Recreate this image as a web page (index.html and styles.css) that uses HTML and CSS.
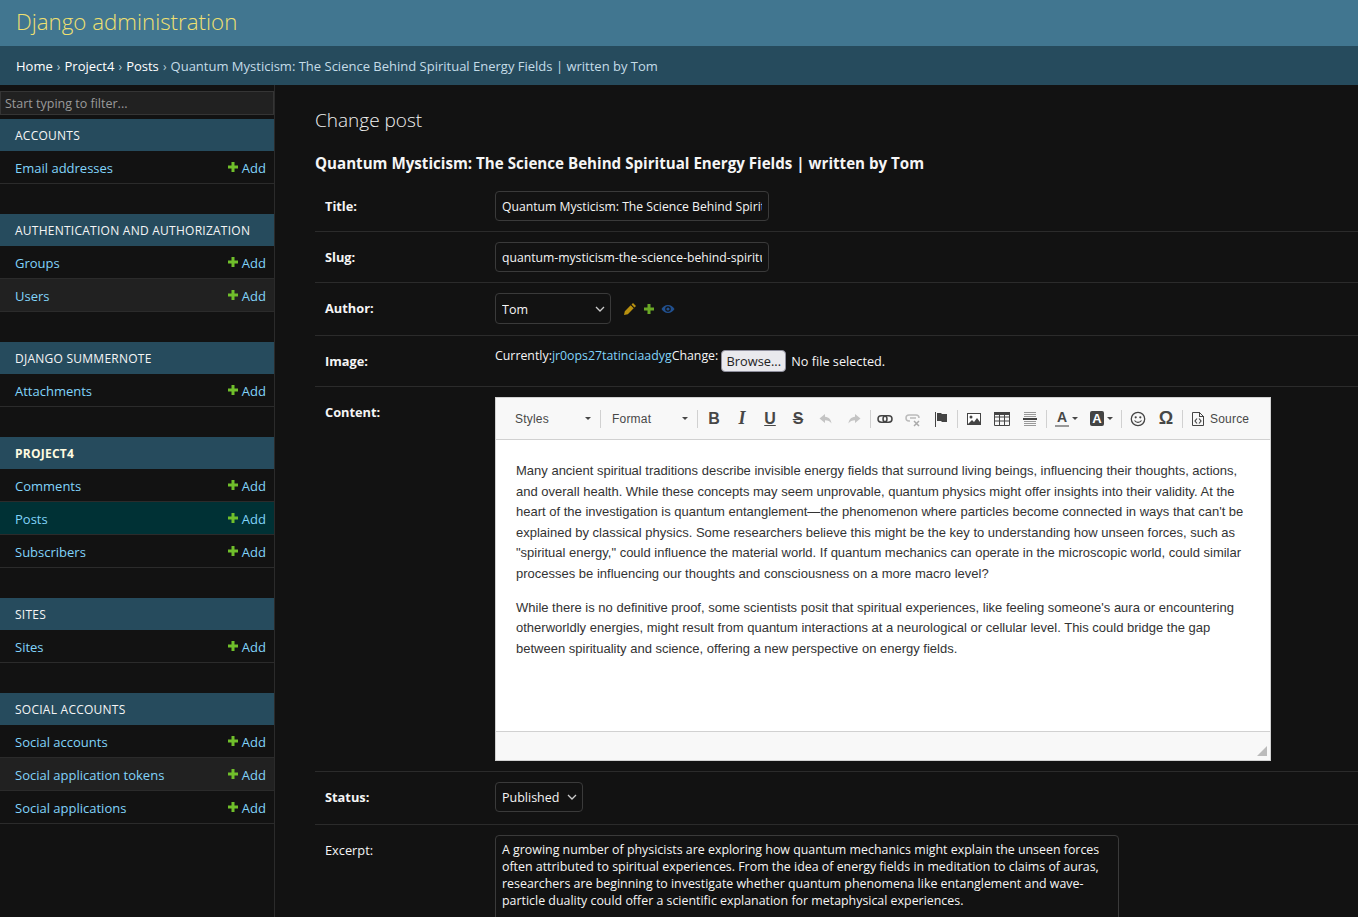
FILE: index.html
```html
<!DOCTYPE html>
<html lang="en">
<head>
  <meta charset="UTF-8">
  <title>Change post | Django site admin</title>
  <link rel="stylesheet" href="styles.css">
</head>
<body>
  <svg class="defs" width="0" height="0">
    <symbol id="plus" viewBox="0 0 12 12"><path d="M4.500 1h3v3.500H11v3H7.500V11h-3V7.500H1v-3h3.500z"/></symbol>
  </svg>

  <header class="branding"><a class="brand" href="#">Django administration</a></header>
  <nav class="crumbs">
    <a href="#">Home</a> <span class="sep">›</span> <a href="#">Project4</a> <span class="sep">›</span> <a href="#">Posts</a> <span class="sep">›</span> Quantum Mysticism: The Science Behind Spiritual Energy Fields | written by Tom
  </nav>

  <div class="layout">
    <aside class="sidebar">
      <input class="filter" type="text" placeholder="Start typing to filter...">

      <section class="app">
        <h3 class="app-name">Accounts</h3>
        <div class="model"><a href="#">Email addresses</a><a class="add" href="#"><svg><use href="#plus"/></svg>Add</a></div>
      </section>

      <section class="app">
        <h3 class="app-name">Authentication and Authorization</h3>
        <div class="model"><a href="#">Groups</a><a class="add" href="#"><svg><use href="#plus"/></svg>Add</a></div>
        <div class="model alt"><a href="#">Users</a><a class="add" href="#"><svg><use href="#plus"/></svg>Add</a></div>
      </section>

      <section class="app">
        <h3 class="app-name">Django Summernote</h3>
        <div class="model"><a href="#">Attachments</a><a class="add" href="#"><svg><use href="#plus"/></svg>Add</a></div>
      </section>

      <section class="app">
        <h3 class="app-name current-app">Project4</h3>
        <div class="model"><a href="#">Comments</a><a class="add" href="#"><svg><use href="#plus"/></svg>Add</a></div>
        <div class="model current"><a href="#">Posts</a><a class="add" href="#"><svg><use href="#plus"/></svg>Add</a></div>
        <div class="model"><a href="#">Subscribers</a><a class="add" href="#"><svg><use href="#plus"/></svg>Add</a></div>
      </section>

      <section class="app">
        <h3 class="app-name">Sites</h3>
        <div class="model"><a href="#">Sites</a><a class="add" href="#"><svg><use href="#plus"/></svg>Add</a></div>
      </section>

      <section class="app">
        <h3 class="app-name">Social Accounts</h3>
        <div class="model"><a href="#">Social accounts</a><a class="add" href="#"><svg><use href="#plus"/></svg>Add</a></div>
        <div class="model alt"><a href="#">Social application tokens</a><a class="add" href="#"><svg><use href="#plus"/></svg>Add</a></div>
        <div class="model"><a href="#">Social applications</a><a class="add" href="#"><svg><use href="#plus"/></svg>Add</a></div>
      </section>
    </aside>

    <main class="content">
      <h1 class="page-title">Change post</h1>
      <h2 class="object-title">Quantum Mysticism: The Science Behind Spiritual Energy Fields | written by Tom</h2>

      <form onsubmit="return false;">
        <div class="row">
          <label class="req">Title:</label>
          <input class="text-input" type="text" value="Quantum Mysticism: The Science Behind Spiritual Energy Fields">
        </div>
        <div class="row">
          <label class="req">Slug:</label>
          <input class="text-input" type="text" value="quantum-mysticism-the-science-behind-spiritual-energy-fields">
        </div>
        <div class="row row-author">
          <label class="req">Author:</label>
          <select class="select author-select"><option>Tom</option></select>
          <div class="related">
            <svg width="14" height="14" viewBox="0 0 14 14"><path fill="#b8900f" d="M10 1l3 3-1.500 1.500-3-3zM7.700 3.300l3 3-5.900 5.900-3.800.8.800-3.800z"/></svg>
            <svg class="rel-plus" width="12" height="12"><use href="#plus"/></svg>
            <svg width="14" height="14" viewBox="0 0 14 14"><path fill="#21508f" fill-rule="evenodd" d="M7 3c3 0 5.300 2 6.500 4C12.300 9 10 11 7 11S1.700 9 .5 7C1.700 5 4 3 7 3zm0 1.200a2.800 2.800 0 1 0 0 5.600 2.800 2.800 0 0 0 0-5.600z"/><circle cx="7" cy="7" r="1.600" fill="#21508f"/></svg>
          </div>
        </div>
        <div class="row row-image">
          <label class="req">Image:</label>
          <p class="file-line">Currently:<a href="#">jr0ops27tatinciaadyg</a>Change:</p>
          <button class="browse" type="button">Browse...</button>
          <span class="file-name">No file selected.</span>
        </div>

        <div class="row">
          <label class="req">Content:</label>
          <div class="editor">
            <div class="toolbar">
              <div class="combo"><span>Styles</span><i class="caret"></i></div>
              <b class="tool-sep"></b>
              <div class="combo"><span>Format</span><i class="caret"></i></div>
              <b class="tool-sep sep-wide"></b>
              <span class="tool letter bold">B</span>
              <span class="tool letter italic">I</span>
              <span class="tool letter under">U</span>
              <span class="tool letter strike">S</span>
              <span class="tool"><svg width="16" height="16" viewBox="0 0 16 16"><path fill="#c4c4c4" d="M7 3L1.500 7.500 7 12V9.300c3 0 5 .7 6.500 3.200C13 8.500 11 6 7 5.700z"/></svg></span>
              <span class="tool"><svg width="16" height="16" viewBox="0 0 16 16"><path fill="#c4c4c4" d="M9 3l5.500 4.500L9 12V9.300c-3 0-5 .7-6.500 3.200C3 8.500 5 6 9 5.700z"/></svg></span>
              <b class="tool-sep sep-tight"></b>
              <span class="tool"><svg width="16" height="16" viewBox="0 0 16 16"><g fill="none" stroke="#444" stroke-width="1.500"><rect x="1" y="4.800" width="9" height="6.400" rx="3.200"/><rect x="6" y="4.800" width="9" height="6.400" rx="3.200"/></g></svg></span>
              <span class="tool"><svg width="16" height="16" viewBox="0 0 16 16"><g fill="none" stroke="#bbb" stroke-width="1.500"><path d="M5 10H4a3 3 0 0 1 0-6h7a3 3 0 0 1 3 3"/><path d="M5 7h6"/></g><path stroke="#aaa" stroke-width="1.500" d="M9 10l5 5M14 10l-5 5"/></svg></span>
              <span class="tool"><svg width="16" height="16" viewBox="0 0 16 16"><path fill="#444" d="M2 1h1v15H2zM4 2h4l1 1h5v8H9l-1-1H4z"/></svg></span>
              <b class="tool-sep"></b>
              <span class="tool"><svg width="16" height="16" viewBox="0 0 16 16"><rect x="1.500" y="2.500" width="13" height="11" fill="#fff" stroke="#444"/><circle cx="5" cy="6" r="1.500" fill="#444"/><path fill="#444" d="M2 13l4-4 2 2 3-4 3 4v2z"/></svg></span>
              <span class="tool"><svg width="16" height="16" viewBox="0 0 16 16"><path fill="#444" d="M0 1h16v3H0z"/><path fill="none" stroke="#444" d="M.5 1.500h15v13H.5zM.5 6h15M.5 10h15M5.500 2v12M10.500 2v12"/></svg></span>
              <span class="tool"><svg width="16" height="16" viewBox="0 0 16 16"><path fill="#999" d="M2 1h12v1H2zM2 3h12v1H2zM2 5h12v1H2zM2 10h12v1H2zM2 12h12v1H2zM2 14h12v1H2z"/><path fill="#444" d="M1 7h14v2H1z"/></svg></span>
              <b class="tool-sep"></b>
              <span class="tool tool-color"><span class="letter bold small under-color">A</span><i class="caret"></i></span>
              <span class="tool tool-color"><span class="letter bold small filled">A</span><i class="caret"></i></span>
              <b class="tool-sep"></b>
              <span class="tool"><svg width="16" height="16" viewBox="0 0 16 16"><circle cx="8" cy="8" r="6.700" fill="none" stroke="#444" stroke-width="1.300"/><circle cx="5.700" cy="6.300" r="1.100" fill="#444"/><circle cx="10.300" cy="6.300" r="1.100" fill="#444"/><path fill="none" stroke="#444" stroke-width="1.200" d="M4.500 9.500c1.800 2.500 5.200 2.500 7 0"/></svg></span>
              <span class="tool letter omega">Ω</span>
              <b class="tool-sep"></b>
              <span class="source"><svg width="14" height="16" viewBox="0 0 14 16"><path fill="none" stroke="#444" d="M1.500 1.500h7l4 4v9h-11z"/><path fill="#444" d="M8 1h1v4h4v1H8z"/><path fill="none" stroke="#444" stroke-width="1.200" d="M6 7.500L4 10l2 2.500M8 7.500l2 2.500-2 2.500"/></svg>Source</span>
            </div>
            <div class="editor-body">
              <p>Many ancient spiritual traditions describe invisible energy fields that surround living beings, influencing their thoughts, actions, and overall health. While these concepts may seem unprovable, quantum physics might offer insights into their validity. At the heart of the investigation is quantum entanglement—the phenomenon where particles become connected in ways that can't be explained by classical physics. Some researchers believe this might be the key to understanding how unseen forces, such as "spiritual energy," could influence the material world. If quantum mechanics can operate in the microscopic world, could similar processes be influencing our thoughts and consciousness on a more macro level?</p>
              <p>While there is no definitive proof, some scientists posit that spiritual experiences, like feeling someone's aura or encountering otherworldly energies, might result from quantum interactions at a neurological or cellular level. This could bridge the gap between spirituality and science, offering a new perspective on energy fields.</p>
            </div>
            <div class="editor-foot"><i class="resizer"></i></div>
          </div>
        </div>

        <div class="row row-status">
          <label class="req">Status:</label>
          <select class="select status-select"><option>Published</option></select>
        </div>
        <div class="row">
          <label>Excerpt:</label>
          <textarea class="excerpt" rows="10">A growing number of physicists are exploring how quantum mechanics might explain the unseen forces often attributed to spiritual experiences. From the idea of energy fields in meditation to claims of auras, researchers are beginning to investigate whether quantum phenomena like entanglement and wave-particle duality could offer a scientific explanation for metaphysical experiences.</textarea>
        </div>
      </form>
    </main>
  </div>
</body>
</html>
```

FILE: styles.css
```css
html, body { height: 100%; overflow: hidden; }
body { margin: 0; display: flex; flex-direction: column; background: #121212; color: #f5f5f5; font-family: "Open Sans", "Noto Sans", sans-serif; font-size: 14px; }
a { text-decoration: none; color: #81d4fa; }
.defs { display: block; height: 0; position: absolute; }

.branding { height: 46px; flex: none; background: #417690; padding: 0 16px 4px; box-sizing: border-box; display: flex; align-items: center; }
.brand { color: #f0e070; font-size: 22.3px; font-weight: 300; }
.crumbs { height: 39px; flex: none; line-height: 40px; background: #264b5d; padding: 0 16px; color: #c4dce8; font-size: 13px; white-space: nowrap; }
.crumbs a { color: #fff; }
.crumbs .sep { color: #b5cdd8; font-size: 12px; margin: 0 .7px; }

.layout { display: flex; flex: 1; min-height: 0; overflow: hidden; }
.sidebar { width: 274px; border-right: 1px solid #2b2b2b; flex: none; padding-top: 6px; box-sizing: content-box; }
.filter { display: block; width: 100%; box-sizing: border-box; height: 24px; padding: 0 4px; background: #212121; border: 1px solid #353535; color: #eee; font: 12.5px "Open Sans", sans-serif; margin-bottom: 4px; }
.filter::placeholder { color: #9a9a9a; }
.app { margin-bottom: 30px; }
.app-name { margin: 0; height: 32px; line-height: 33px; padding: 0 15px; background: #264b5d; color: #f5f5f5; font-size: 12px; font-weight: 400; letter-spacing: .25px; text-transform: uppercase; }
.current-app { font-weight: 700; color: #fffbe0; }
.model { display: flex; justify-content: space-between; align-items: center; height: 30px; padding: 2px 8px 0 15px; border-bottom: 1px solid #2b2b2b; font-size: 13px; }
.model.alt { background: #212121; }
.model.current { background: #003135; }
.add { display: flex; align-items: center; }
.add svg { width: 12px; height: 12px; fill: #70bf2b; margin-right: 3px; position: relative; top: -1px; }

.content { flex: 1; padding: 0 0 0 40px; min-width: 0; }
.page-title { margin: 22px 0 0; font-size: 19px; line-height: 27px; font-weight: 300; color: #f0f0f0; }
.object-title { margin: 19px 0 0; font-size: 15.15px; line-height: 20px; font-weight: 700; color: #f5f5f5; }

form { margin-top: 8px; }
.row { display: flex; align-items: flex-start; padding: 10px; border-bottom: 1px solid #2b2b2b; }
.row label { width: 170px; flex: none; font-size: 12.8px; padding-top: 6px; }
.row label.req { font-weight: 700; }
.text-input { width: 274px; height: 30px; box-sizing: border-box; padding: 1px 6px 0; background: #121212; border: 1px solid #3a3a3a; border-radius: 4px; color: #f5f5f5; font: 12.2px "Open Sans", sans-serif; }
.select { appearance: none; height: 30px; box-sizing: border-box; padding: 1px 6px 0; background: #121212 url("data:image/svg+xml,%3Csvg xmlns='http://www.w3.org/2000/svg' width='10' height='6'%3E%3Cpath fill='none' stroke='%23ccc' stroke-width='1.300' d='M1 1l4 4 4-4'/%3E%3C/svg%3E") no-repeat right 5px center; border: 1px solid #3a3a3a; border-radius: 4px; color: #f5f5f5; font: 12.5px "Open Sans", sans-serif; }
.author-select { width: 116px; height: 31px; }
.status-select { width: 88px; }
.row-author { padding-bottom: 11px; }
.related { display: flex; align-items: center; gap: 6px; margin: 9px 0 0 12px; }
.rel-plus { fill: #6aa826; }

.row-image { padding-bottom: 14px; }
.row-image label { padding-top: 6px; }
.file-line { margin: 0; padding-top: 1px; font-size: 12.35px; line-height: 18px; }
.browse { margin: 4px 0 0 3px; height: 22px; width: 65px; padding: 0; background: #e9e9ed; border: 1px solid #8f8f9d; border-radius: 4px; color: #222; font: 12.8px "Open Sans", sans-serif; }
.file-name { margin: 6px 0 0 5px; font-size: 12.7px; }

.editor { width: 774px; border: 1px solid #d1d1d1; background: #fff; color: #333; font-family: "Liberation Sans", Arial, sans-serif; }
.toolbar { height: 41px; background: #f8f8f8; border-bottom: 1px solid #d1d1d1; display: flex; align-items: center; padding-left: 9px; }
.tool-sep { width: 1px; height: 18px; background: #d1d1d1; flex: none; margin: 0 2px; }
.combo { width: 92px; flex: none; display: flex; align-items: center; justify-content: space-between; box-sizing: border-box; padding: 0 6px 0 10px; font-size: 12px; letter-spacing: .2px; color: #484848; }
.combo + .tool-sep { margin: 0 1px 0 3px; }
.combo + .sep-wide { margin-right: 2px; }
.sep-tight { margin-right: 0; }
.caret { display: block; width: 0; height: 0; border: 3px solid transparent; border-top: 3px solid #474747; border-bottom: 0; }
.tool { width: 28px; flex: none; display: flex; align-items: center; justify-content: center; color: #474747; }
.letter { font-size: 16px; font-family: "Liberation Sans", sans-serif; }
.bold { font-weight: 700; }
.italic { font-family: "Liberation Serif", serif; font-style: italic; font-weight: 700; font-size: 18px; }
.under { font-weight: 700; text-decoration: underline; }
.strike { font-weight: 700; text-decoration: line-through; }
.omega { font-weight: 700; font-size: 18px; }
.tool-color { width: 35px; gap: 3px; }
.small { font-size: 14px; }
.under-color { border-bottom: 2px solid #999; line-height: 15px; padding: 0 2px; }
.filled { background: #444; color: #fff; border-radius: 2px; line-height: 15px; padding: 0 2px; font-size: 13px; }
.source { display: flex; align-items: center; gap: 5px; padding-left: 6px; font-size: 12px; letter-spacing: .2px; color: #484848; }

.editor-body { height: 291px; box-sizing: border-box; padding: 21px 20px 0; font-size: 13px; line-height: 20.6px; color: #333; overflow: hidden; }
.editor-body p { margin: 0 0 13px; }
.editor-foot { height: 28px; background: #f8f8f8; border-top: 1px solid #d1d1d1; position: relative; }
.resizer { position: absolute; right: 3px; bottom: 4px; width: 0; height: 0; border-left: 10px solid transparent; border-bottom: 10px solid #bbb; }

.row-status { padding-bottom: 12px; }
.excerpt { width: 624px; height: 170px; box-sizing: border-box; padding: 5px 6px; background: #121212; border: 1px solid #3a3a3a; border-radius: 4px; color: #f5f5f5; font: 12.4px/17px "Open Sans", sans-serif; resize: none; overflow: hidden; }
```
